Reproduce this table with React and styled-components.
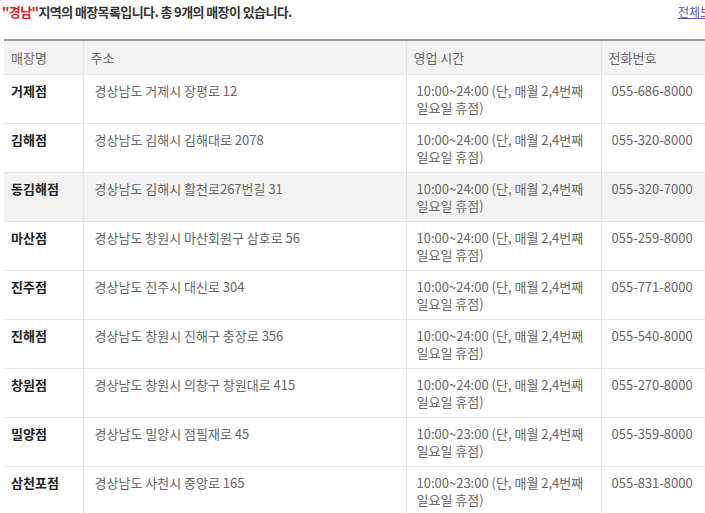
import React from 'react';
import styled, { createGlobalStyle } from 'styled-components';

const stores = [
  { name: '거제점', addr: '경상남도 거제시 장평로 12', hours: '10:00~24:00 (단, 매월 2,4번째 일요일 휴점)', tel: '055-686-8000' },
  { name: '김해점', addr: '경상남도 김해시 김해대로 2078', hours: '10:00~24:00 (단, 매월 2,4번째 일요일 휴점)', tel: '055-320-8000' },
  { name: '동김해점', addr: '경상남도 김해시 활천로267번길 31', hours: '10:00~24:00 (단, 매월 2,4번째 일요일 휴점)', tel: '055-320-7000', hover: true },
  { name: '마산점', addr: '경상남도 창원시 마산회원구 삼호로 56', hours: '10:00~24:00 (단, 매월 2,4번째 일요일 휴점)', tel: '055-259-8000' },
  { name: '진주점', addr: '경상남도 진주시 대신로 304', hours: '10:00~24:00 (단, 매월 2,4번째 일요일 휴점)', tel: '055-771-8000' },
  { name: '진해점', addr: '경상남도 창원시 진해구 충장로 356', hours: '10:00~24:00 (단, 매월 2,4번째 일요일 휴점)', tel: '055-540-8000' },
  { name: '창원점', addr: '경상남도 창원시 의창구 창원대로 415', hours: '10:00~24:00 (단, 매월 2,4번째 일요일 휴점)', tel: '055-270-8000' },
  { name: '밀양점', addr: '경상남도 밀양시 점필재로 45', hours: '10:00~23:00 (단, 매월 2,4번째 일요일 휴점)', tel: '055-359-8000' },
  { name: '삼천포점', addr: '경상남도 사천시 중앙로 165', hours: '10:00~23:00 (단, 매월 2,4번째 일요일 휴점)', tel: '055-831-8000' },
];

function App() {
  return (
    <>
      <GlobalStyle />
      <Page>
        <TopBar>
          <Title>
            <em>"경남"</em>지역의 매장목록입니다. 총 9개의 매장이 있습니다.
          </Title>
          <AllLink href="#">전체보기</AllLink>
        </TopBar>
        <StoreTable>
          <colgroup>
            <col style={{ width: 79 }} />
            <col style={{ width: 323 }} />
            <col style={{ width: 195 }} />
            <col style={{ width: 130 }} />
          </colgroup>
          <thead>
            <tr>
              <Th>매장명</Th>
              <Th>주소</Th>
              <Th>영업 시간</Th>
              <Th>전화번호</Th>
            </tr>
          </thead>
          <tbody>
            {stores.map((s) => (
              <Row key={s.name} $hover={s.hover}>
                <NameCell>{s.name}</NameCell>
                <Td $pad={11}>{s.addr}</Td>
                <Td $pad={10}>{s.hours}</Td>
                <Td $pad={10}>{s.tel}</Td>
              </Row>
            ))}
          </tbody>
        </StoreTable>
      </Page>
    </>
  );
}

const GlobalStyle = createGlobalStyle`
  body {
    margin: 0;
    overflow: hidden;
    background: #fff;
    font-family: "Noto Sans CJK KR", "Noto Sans", sans-serif;
  }
`;

const Page = styled.div`
  width: 740px;
`;

const TopBar = styled.div`
  display: flex;
  justify-content: space-between;
  align-items: center;
  height: 22px;
  padding: 0 0 0 2px;
  margin-bottom: 17px;
`;

const Title = styled.h3`
  margin: 0;
  font-size: 13px;
  font-weight: bold;
  color: #333;
  letter-spacing: -0.6px;
  em {
    font-style: normal;
    color: #e02020;
  }
`;

const AllLink = styled.a`
  width: 62px;
  font-size: 12px;
  color: #5a5aa8;
  text-decoration: underline;
  white-space: nowrap;
`;

const StoreTable = styled.table`
  margin-left: 4px;
  border-collapse: collapse;
  table-layout: fixed;
  border-top: 2px solid #999;
  font-size: 13px;
  line-height: 17px;
  color: #666;
`;

const Th = styled.th`
  height: 33px;
  padding: 0 7px;
  background: #f3f3f3;
  font-weight: normal;
  text-align: left;
  color: #666;
  border-bottom: 1px solid #e5e5e5;
  border-left: 1px solid #e5e5e5;
  &:first-child {
    border-left: none;
  }
`;

const Row = styled.tr`
  background: ${(p) => (p.$hover ? '#f3f3f3' : '#fff')};
  border-bottom: 1px solid #e5e5e5;
`;

const Td = styled.td`
  height: 34px;
  padding: 7px ${(p) => p.$pad}px 7px;
  vertical-align: top;
  border-left: 1px solid #e5e5e5;
`;

const NameCell = styled.td`
  height: 34px;
  padding: 7px 7px;
  vertical-align: top;
  font-weight: bold;
  color: #222;
`;

export default App;
